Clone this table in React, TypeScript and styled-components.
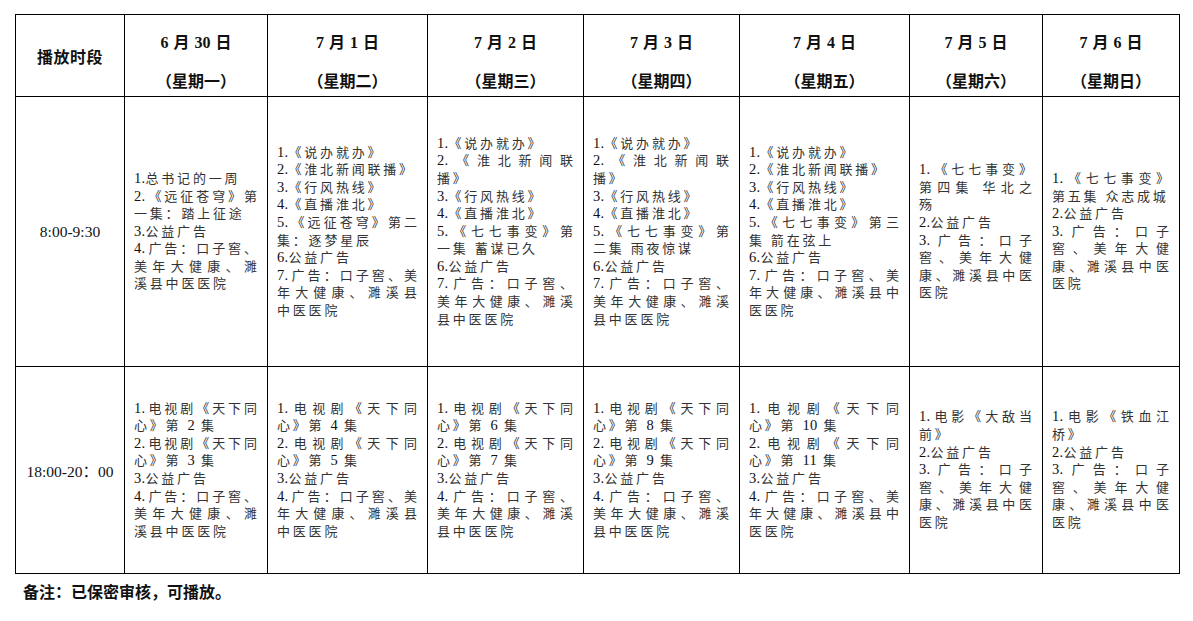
import React from "react";
import styled, { createGlobalStyle } from "styled-components";

const GlobalStyle = createGlobalStyle`
  body {
    margin: 0;
    background: #fff;
    font-family: "Liberation Serif", "Noto Sans CJK SC", serif;
  }
`;

// each item is one numbered entry, "|" marks where the original document wraps
const days = [
  { date: "6 月 30 日", week: "（星期一）" },
  { date: "7 月 1 日", week: "（星期二）" },
  { date: "7 月 2 日", week: "（星期三）" },
  { date: "7 月 3 日", week: "（星期四）" },
  { date: "7 月 4 日", week: "（星期五）" },
  { date: "7 月 5 日", week: "（星期六）" },
  { date: "7 月 6 日", week: "（星期日）" },
];

const widths = [109, 143, 160, 156, 156, 170, 133, 137];

const morning: string[][] = [
  [
    "1.总书记的一周",
    "2.《远征苍穹》第|一集：踏上征途",
    "3.公益广告",
    "4.广告：口子窖、|美年大健康、濉|溪县中医医院",
  ],
  [
    "1.《说办就办》",
    "2.《淮北新闻联播》",
    "3.《行风热线》",
    "4.《直播淮北》",
    "5.《远征苍穹》第二|集：逐梦星辰",
    "6.公益广告",
    "7.广告：口子窖、美|年大健康、濉溪县|中医医院",
  ],
  [
    "1.《说办就办》",
    "2.《淮北新闻联|播》",
    "3.《行风热线》",
    "4.《直播淮北》",
    "5.《七七事变》第|一集 蓄谋已久",
    "6.公益广告",
    "7.广告：口子窖、|美年大健康、濉溪|县中医医院",
  ],
  [
    "1.《说办就办》",
    "2.《淮北新闻联|播》",
    "3.《行风热线》",
    "4.《直播淮北》",
    "5.《七七事变》第|二集 雨夜惊谋",
    "6.公益广告",
    "7.广告：口子窖、|美年大健康、濉溪|县中医医院",
  ],
  [
    "1.《说办就办》",
    "2.《淮北新闻联播》",
    "3.《行风热线》",
    "4.《直播淮北》",
    "5.《七七事变》第三|集 箭在弦上",
    "6.公益广告",
    "7.广告：口子窖、美|年大健康、濉溪县中|医医院",
  ],
  [
    "1.《七七事变》|第四集 华北之|殇",
    "2.公益广告",
    "3.广告：口子|窖、美年大健|康、濉溪县中医|医院",
  ],
  [
    "1.《七七事变》|第五集 众志成城",
    "2.公益广告",
    "3.广告：口子|窖、美年大健|康、濉溪县中医|医院",
  ],
];

const evening: string[][] = [
  [
    "1.电视剧《天下同|心》第 2 集",
    "2.电视剧《天下同|心》第 3 集",
    "3.公益广告",
    "4.广告：口子窖、|美年大健康、濉|溪县中医医院",
  ],
  [
    "1.电视剧《天下同|心》第 4 集",
    "2.电视剧《天下同|心》第 5 集",
    "3.公益广告",
    "4.广告：口子窖、美|年大健康、濉溪县|中医医院",
  ],
  [
    "1.电视剧《天下同|心》第 6 集",
    "2.电视剧《天下同|心》第 7 集",
    "3.公益广告",
    "4.广告：口子窖、|美年大健康、濉溪|县中医医院",
  ],
  [
    "1.电视剧《天下同|心》第 8 集",
    "2.电视剧《天下同|心》第 9 集",
    "3.公益广告",
    "4.广告：口子窖、|美年大健康、濉溪|县中医医院",
  ],
  [
    "1.电视剧《天下同|心》第 10 集",
    "2.电视剧《天下同|心》第 11 集",
    "3.公益广告",
    "4.广告：口子窖、美|年大健康、濉溪县中|医医院",
  ],
  [
    "1.电影《大敌当|前》",
    "2.公益广告",
    "3.广告：口子|窖、美年大健|康、濉溪县中医|医院",
  ],
  [
    "1.电影《铁血江|桥》",
    "2.公益广告",
    "3.广告：口子|窖、美年大健|康、濉溪县中医|医院",
  ],
];

const slots = [
  { time: "8:00-9:30", height: 270, items: morning },
  { time: "18:00-20：00", height: 207, items: evening },
];

// digits come from the serif face at a slightly larger size, like the source doc
function withDigits(text: string) {
  return text.split(/([0-9.]+)/).map((part, i) =>
    /^[0-9.]+$/.test(part) ? <Num key={i}>{part}</Num> : part
  );
}

export default function App() {
  return (
    <Page>
      <GlobalStyle />
      <Schedule>
        <colgroup>
          {widths.map((w, i) => (
            <col key={i} style={{ width: w }} />
          ))}
        </colgroup>
        <tbody>
          <Row $h={82}>
            <HeadCell>
              <SlotTitle>播放时段</SlotTitle>
            </HeadCell>
            {days.map((d) => (
              <HeadCell key={d.date}>
                <DayLabel>
                  <div>{d.date}</div>
                  <div>{d.week}</div>
                </DayLabel>
              </HeadCell>
            ))}
          </Row>
          {slots.map((s) => (
            <Row key={s.time} $h={s.height}>
              <TimeCell>{s.time}</TimeCell>
              {s.items.map((list, i) => (
                <ProgramCell key={i}>
                  {list.map((item) => {
                    const lines = item.split("|");
                    return (
                      <div key={item}>
                        {lines.map((ln, j) => (
                          <Line key={j} $fill={j < lines.length - 1}>
                            {withDigits(ln)}
                          </Line>
                        ))}
                      </div>
                    );
                  })}
                </ProgramCell>
              ))}
            </Row>
          ))}
        </tbody>
      </Schedule>
      <Note>备注：已保密审核，可播放。</Note>
    </Page>
  );
}

const Page = styled.div`
  padding: 14px 0 0 15px;
`;

const Schedule = styled.table`
  width: 1164px;
  table-layout: fixed;
  border-collapse: collapse;
  border: 1px solid #000;
`;

const Row = styled.tr<{ $h: number }>`
  height: ${(p) => p.$h}px;
`;

const Cell = styled.td`
  border: 1px solid #000;
  vertical-align: middle;
  padding: 0;
`;

const HeadCell = styled(Cell)`
  text-align: center;
  font-weight: bold;
  color: #111;
`;

const SlotTitle = styled.div`
  font-size: 16px;
  letter-spacing: 0.5px;
`;

const DayLabel = styled.div`
  box-sizing: border-box;
  height: 80px;
  padding-top: 7px;
  font-size: 16px;
  line-height: 39px;
  word-spacing: 1px;
`;

const TimeCell = styled(Cell)`
  text-align: center;
  font-size: 15.5px;
  color: #111;
`;

const ProgramCell = styled(Cell)`
  padding: 0 10px 0 9px;
  font-size: 13px;
  line-height: 17.6px;
  color: #333;
`;

const Line = styled.div<{ $fill: boolean }>`
  text-align: ${(p) => (p.$fill ? "justify" : "left")};
  text-align-last: ${(p) => (p.$fill ? "justify" : "left")};
  letter-spacing: ${(p) => (p.$fill ? "0" : "2.8px")};
`;

const Num = styled.span`
  font-size: 14.5px;
  letter-spacing: 0.3px;
  color: #111;
`;

const Note = styled.div`
  margin: 9px 0 0 8px;
  font-size: 16px;
  font-weight: bold;
  line-height: 20px;
  color: #111;
`;
